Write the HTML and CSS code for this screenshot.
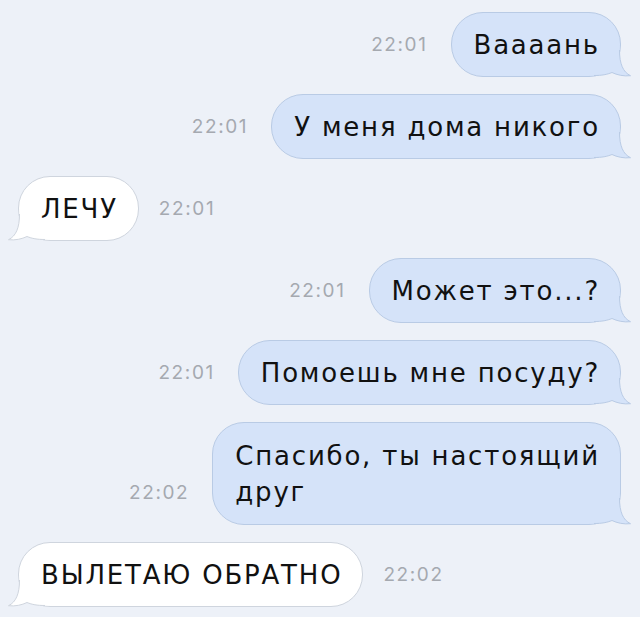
FILE: index.html
```html
<!DOCTYPE html>
<html lang="ru">
  <head>
    <meta charset="UTF-8" />
    <meta name="viewport" content="width=device-width, initial-scale=1.0" />
    <title>Чат</title>
    <link rel="stylesheet" href="styles.css">
  </head>
  <body>
    <div class="chat">
      <div class="row out">
        <span class="time">22:01</span>
        <div class="bubble">
          <svg class="tail" width="42" height="31" viewBox="0 0 42 31"><path class="tail-fill" d="M29.5 4 C29.5 18 33 26 40.5 29.7 C34 30.5 27 29 22 26.5 C17 28.5 12 29.5 4 29.5 L0 29.5 L0 0 L29.5 0 Z"/><path class="tail-line" d="M29.5 4 C29.5 18 33 26 40.5 29.7 C34 30.5 27 29 22 26.5 C17 28.5 12 29.5 4 29.5"/></svg>
          <span class="text">Ваааань</span>
        </div>
      </div>
      <div class="row out">
        <span class="time">22:01</span>
        <div class="bubble">
          <svg class="tail" width="42" height="31" viewBox="0 0 42 31"><path class="tail-fill" d="M29.5 4 C29.5 18 33 26 40.5 29.7 C34 30.5 27 29 22 26.5 C17 28.5 12 29.5 4 29.5 L0 29.5 L0 0 L29.5 0 Z"/><path class="tail-line" d="M29.5 4 C29.5 18 33 26 40.5 29.7 C34 30.5 27 29 22 26.5 C17 28.5 12 29.5 4 29.5"/></svg>
          <span class="text">У меня дома никого</span>
        </div>
      </div>
      <div class="row in">
        <div class="bubble">
          <svg class="tail" width="42" height="31" viewBox="0 0 42 31"><path class="tail-fill" d="M29.5 4 C29.5 18 33 26 40.5 29.7 C34 30.5 27 29 22 26.5 C17 28.5 12 29.5 4 29.5 L0 29.5 L0 0 L29.5 0 Z"/><path class="tail-line" d="M29.5 4 C29.5 18 33 26 40.5 29.7 C34 30.5 27 29 22 26.5 C17 28.5 12 29.5 4 29.5"/></svg>
          <span class="text">ЛЕЧУ</span>
        </div>
        <span class="time">22:01</span>
      </div>
      <div class="row out">
        <span class="time">22:01</span>
        <div class="bubble">
          <svg class="tail" width="42" height="31" viewBox="0 0 42 31"><path class="tail-fill" d="M29.5 4 C29.5 18 33 26 40.5 29.7 C34 30.5 27 29 22 26.5 C17 28.5 12 29.5 4 29.5 L0 29.5 L0 0 L29.5 0 Z"/><path class="tail-line" d="M29.5 4 C29.5 18 33 26 40.5 29.7 C34 30.5 27 29 22 26.5 C17 28.5 12 29.5 4 29.5"/></svg>
          <span class="text">Может это...?</span>
        </div>
      </div>
      <div class="row out">
        <span class="time">22:01</span>
        <div class="bubble">
          <svg class="tail" width="42" height="31" viewBox="0 0 42 31"><path class="tail-fill" d="M29.5 4 C29.5 18 33 26 40.5 29.7 C34 30.5 27 29 22 26.5 C17 28.5 12 29.5 4 29.5 L0 29.5 L0 0 L29.5 0 Z"/><path class="tail-line" d="M29.5 4 C29.5 18 33 26 40.5 29.7 C34 30.5 27 29 22 26.5 C17 28.5 12 29.5 4 29.5"/></svg>
          <span class="text">Помоешь мне посуду?</span>
        </div>
      </div>
      <div class="row out">
        <span class="time">22:02</span>
        <div class="bubble multi">
          <svg class="tail" width="42" height="31" viewBox="0 0 42 31"><path class="tail-fill" d="M29.5 4 C29.5 18 33 26 40.5 29.7 C34 30.5 27 29 22 26.5 C17 28.5 12 29.5 4 29.5 L0 29.5 L0 0 L29.5 0 Z"/><path class="tail-line" d="M29.5 4 C29.5 18 33 26 40.5 29.7 C34 30.5 27 29 22 26.5 C17 28.5 12 29.5 4 29.5"/></svg>
          <span class="text">Спасибо, ты настоящий<br>друг</span>
        </div>
      </div>
      <div class="row in">
        <div class="bubble">
          <svg class="tail" width="42" height="31" viewBox="0 0 42 31"><path class="tail-fill" d="M29.5 4 C29.5 18 33 26 40.5 29.7 C34 30.5 27 29 22 26.5 C17 28.5 12 29.5 4 29.5 L0 29.5 L0 0 L29.5 0 Z"/><path class="tail-line" d="M29.5 4 C29.5 18 33 26 40.5 29.7 C34 30.5 27 29 22 26.5 C17 28.5 12 29.5 4 29.5"/></svg>
          <span class="text">ВЫЛЕТАЮ ОБРАТНО</span>
        </div>
        <span class="time">22:02</span>
      </div>
    </div>
  </body>
</html>
```

FILE: styles.css
```css
html, body {
  margin: 0;
  background: #edf1f8;
}
body {
  font-family: "DejaVu Sans", Inter, sans-serif;
  color: #111;
}
.chat {
  display: flex;
  flex-direction: column;
  gap: 17px;
  padding: 12px 19px 10px 18px;
}
.row {
  display: flex;
  align-items: flex-end;
  gap: 23px;
}
.row.out {
  justify-content: flex-end;
}
.row.in {
  justify-content: flex-start;
  gap: 20px;
}
.time {
  font-family: Inter, sans-serif;
  font-size: 19px;
  letter-spacing: 1.6px;
  line-height: 36px;
  margin-bottom: 14px;
  color: #a5a9b0;
}
.bubble {
  position: relative;
  font-size: 26px;
  letter-spacing: 1.8px;
  line-height: 36px;
  padding: 13.5px 20px 13.5px 22px;
  border-radius: 32px;
  border: 1px solid #b9cbe5;
  background: #d5e3f9;
}
.bubble.multi {
  padding-top: 14.5px;
  padding-bottom: 14.5px;
}
.in .bubble {
  background: #fff;
  border-color: #cfd5de;
}
.text {
  position: relative;
}
.tail {
  position: absolute;
  right: -12px;
  bottom: -1px;
}
.in .tail {
  right: auto;
  left: -12px;
  transform: scaleX(-1);
}
.tail-fill {
  fill: #d5e3f9;
}
.tail-line {
  fill: none;
  stroke: #b9cbe5;
  stroke-width: 1;
}
.in .tail-fill {
  fill: #fff;
}
.in .tail-line {
  stroke: #cfd5de;
}
```
